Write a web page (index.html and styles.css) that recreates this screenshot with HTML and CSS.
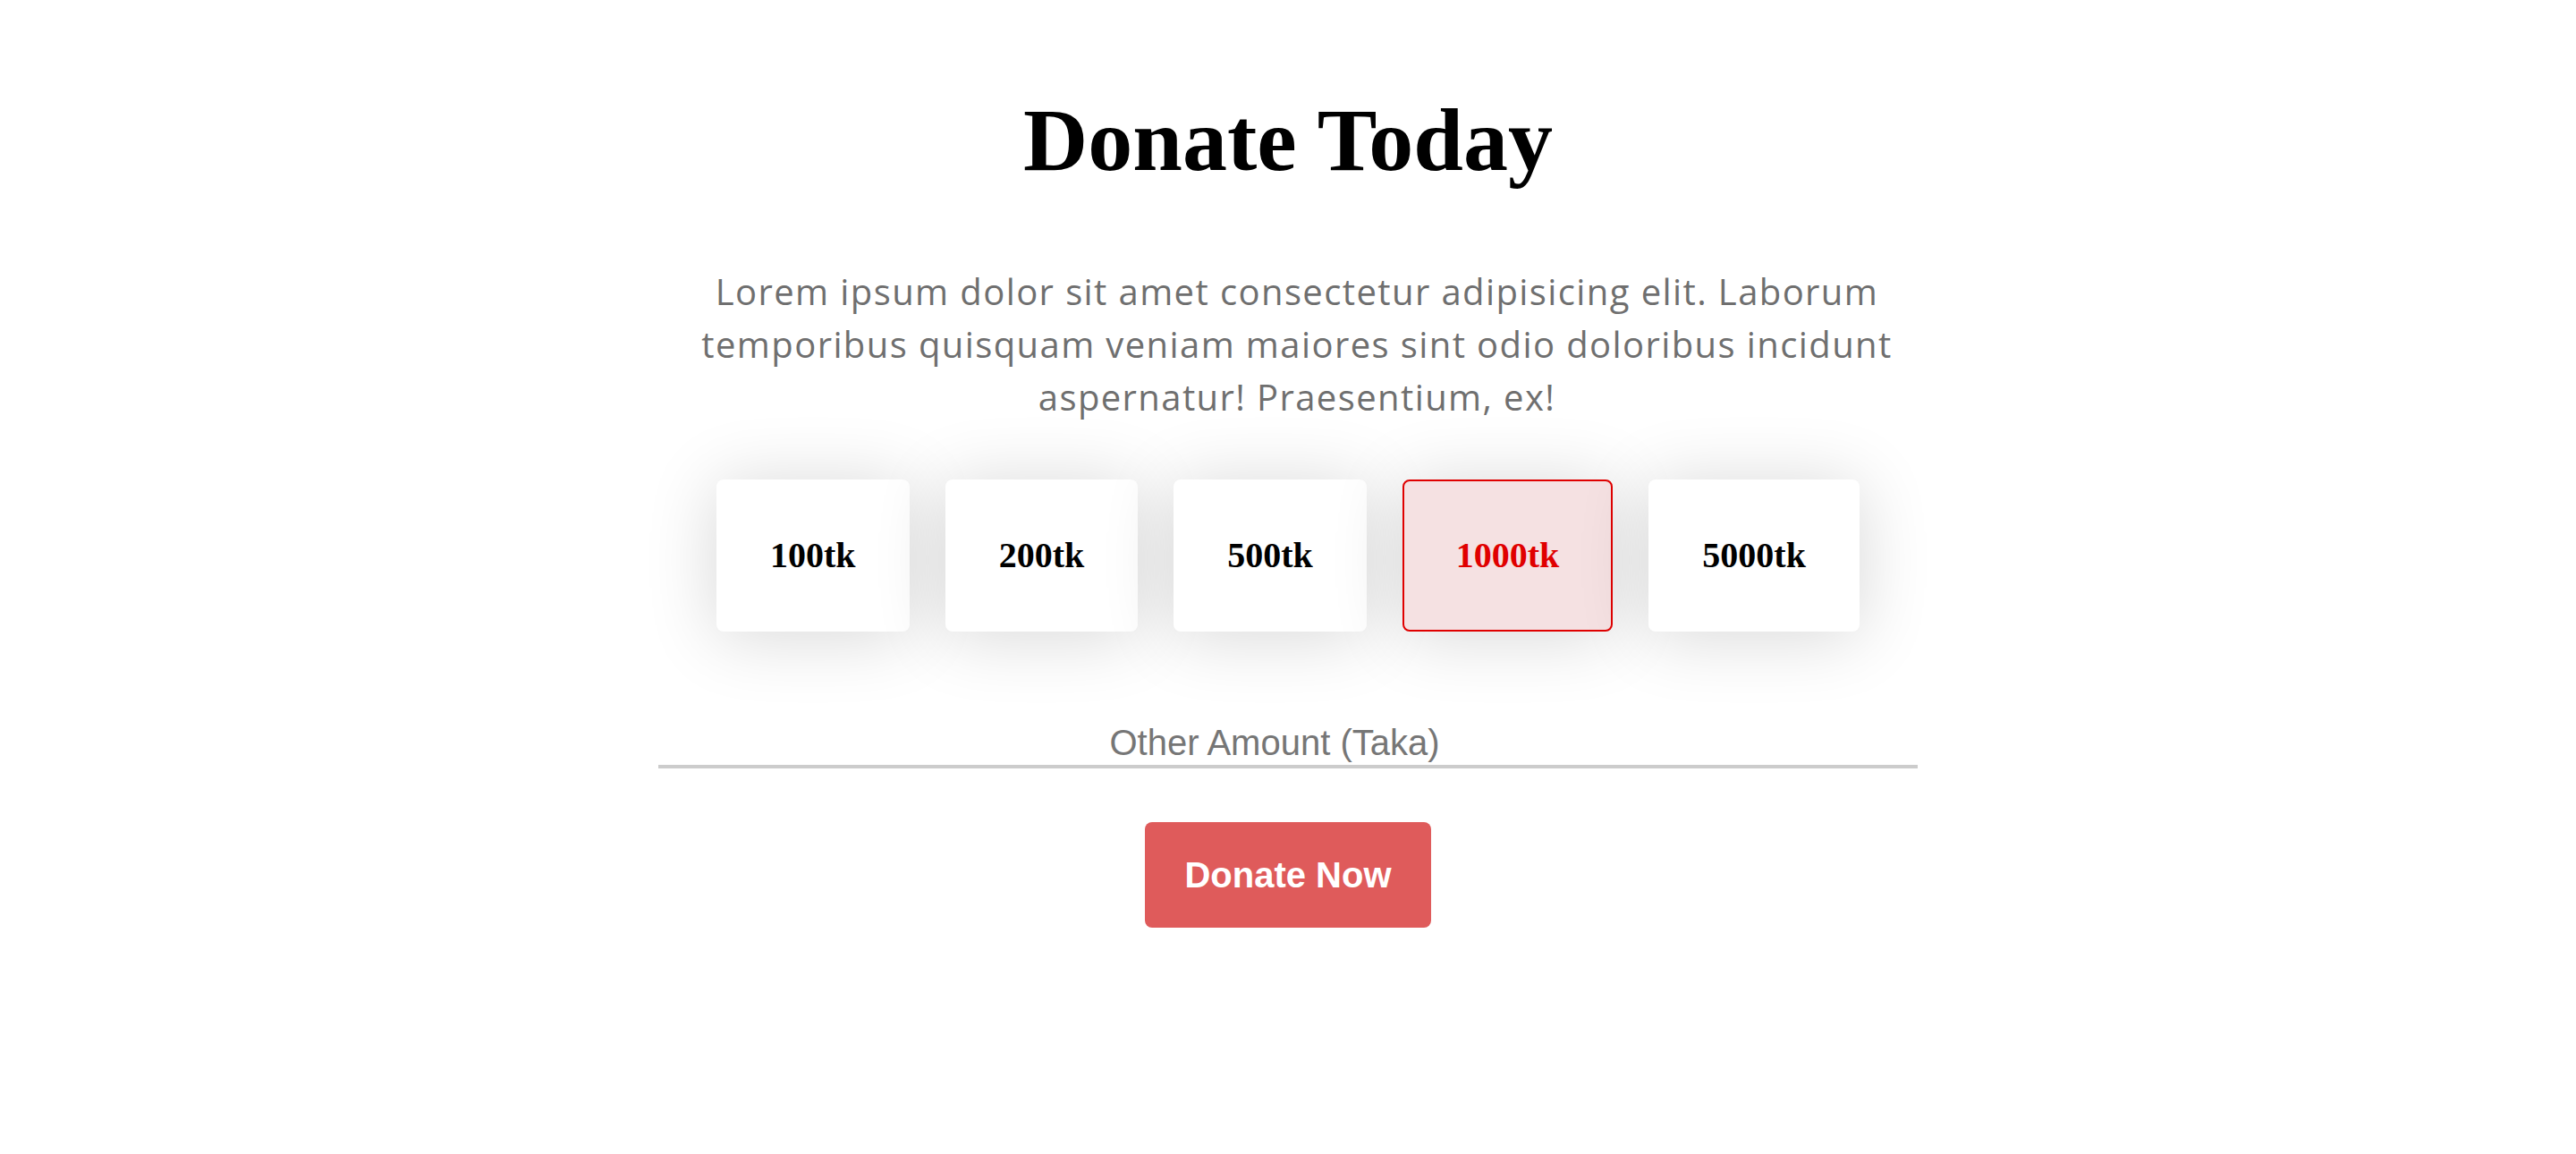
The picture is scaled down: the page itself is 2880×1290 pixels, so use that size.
FILE: index.html
```html
<!DOCTYPE html>
<html lang="en">
<head>
<meta charset="utf-8">
<title>Donate Today</title>
<link rel="stylesheet" href="styles.css">
</head>
<body>
<main class="donate">
  <h1 class="donate__title">Donate Today</h1>
  <p class="donate__lead">Lorem ipsum dolor sit amet consectetur adipisicing elit. Laborum temporibus quisquam veniam maiores sint odio doloribus incidunt aspernatur! Praesentium, ex!</p>
  <div class="amounts">
    <div class="amount">100tk</div>
    <div class="amount">200tk</div>
    <div class="amount">500tk</div>
    <div class="amount amount--selected">1000tk</div>
    <div class="amount">5000tk</div>
  </div>
  <input class="other-amount" type="text" placeholder="Other Amount (Taka)">
  <button class="donate-btn" type="button">Donate Now</button>
</main>
</body>
</html>
```
FILE: styles.css
```css
html, body {
  margin: 0;
  background: #ffffff;
}

.donate {
  width: 1408px;
  margin: 0 auto;
  padding-top: 99px;
  display: flex;
  flex-direction: column;
  align-items: center;
}

.donate__title {
  margin: 0;
  font-family: "Liberation Serif", "Times New Roman", serif;
  font-weight: bold;
  font-size: 100px;
  line-height: 115px;
  color: #000;
}

.donate__lead {
  margin: 82px 0 0;
  padding-left: 20px;
  font-family: "Open Sans", sans-serif;
  font-size: 40px;
  line-height: 59px;
  letter-spacing: 1.4px;
  color: #6f6f6f;
  text-align: center;
}

.amounts {
  display: flex;
  gap: 40px;
  margin-top: 63px;
}

.amount {
  padding: 58px;
  border: 2px solid transparent;
  border-radius: 8px;
  background: #ffffff;
  box-shadow: 0 5px 80px rgba(0, 0, 0, 0.16);
  font-family: "Liberation Serif", "Times New Roman", serif;
  font-weight: bold;
  font-size: 40px;
  line-height: 50px;
  color: #000;
}

.amount--selected {
  background: #f5e1e2;
  border-color: #e00000;
  color: #e00000;
}

.other-amount {
  margin-top: 100px;
  width: 1408px;
  box-sizing: border-box;
  padding: 2px 30px 2px 0;
  border: 0;
  border-bottom: 4px solid #cccccc;
  background: transparent;
  outline: none;
  font-family: "Liberation Sans", Arial, sans-serif;
  font-size: 40px;
  text-align: center;
  color: #333;
}

.other-amount::placeholder {
  color: #767676;
}

.donate-btn {
  margin-top: 60px;
  padding: 36px 44px;
  border: 0;
  border-radius: 8px;
  background: #df5b5b;
  font-family: "Liberation Sans", Arial, sans-serif;
  font-weight: bold;
  font-size: 40px;
  line-height: 46px;
  color: #ffffff;
}
```
